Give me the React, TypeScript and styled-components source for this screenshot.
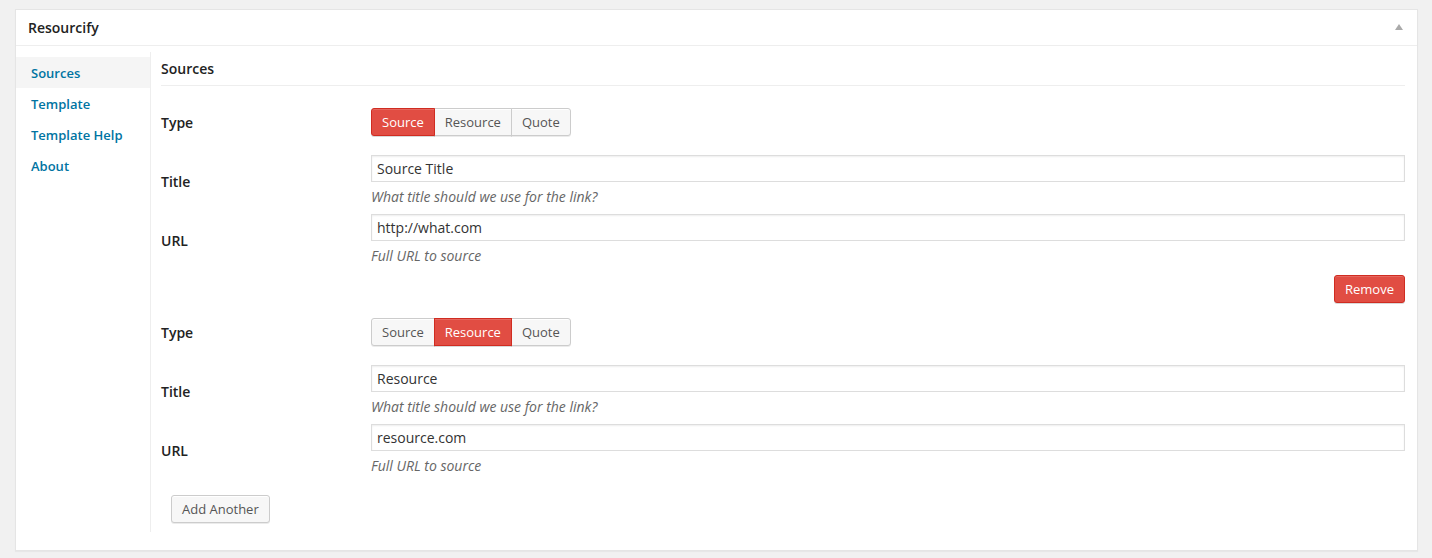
import React from "react";
import styled, { createGlobalStyle } from "styled-components";

const Global = createGlobalStyle`
  html, body { margin: 0; padding: 0; background: #f1f1f1; }
  body { font-family: "Open Sans", "Noto Sans", sans-serif; font-size: 13px; color: #444; }
  * { box-sizing: border-box; }
`;

const Page = styled.div`
  padding: 9px 14px 8px 15px;
`;

const Panel = styled.div`
  background: #fff;
  border: 1px solid #e5e5e5;
  box-shadow: 0 1px 1px rgba(0, 0, 0, 0.04);
`;

const Header = styled.div`
  height: 36px;
  display: flex;
  align-items: center;
  justify-content: space-between;
  padding: 0 14px 0 12px;
  border-bottom: 1px solid #eee;
`;

const HeaderTitle = styled.h2`
  margin: 0;
  font-size: 14px;
  font-weight: 600;
  color: #222;
  line-height: 20px;
`;

const Toggle = styled.span`
  width: 0;
  height: 0;
  border-left: 4px solid transparent;
  border-right: 4px solid transparent;
  border-bottom: 6px solid #aaa;
  margin-top: -1px;
`;

const Body = styled.div`
  display: flex;
  padding: 6px 12px 18px 0;
`;

const Sidebar = styled.ul`
  list-style: none;
  margin: 0;
  padding: 5px 0 0;
  width: 135px;
  flex: none;
  border-right: 1px solid #eee;
`;

const TabItem = styled.li<{ $active?: boolean }>`
  height: 31px;
  display: flex;
  align-items: center;
  padding: 0 15px;
  background: ${(p) => (p.$active ? "#f5f5f5" : "transparent")};
  color: #0074a2;
  font-weight: 600;
  font-size: 13px;
`;

const Content = styled.div`
  flex: 1;
  margin-left: 10px;
  padding-bottom: 9px;
`;

const SectionTitle = styled.h3`
  margin: 7px 0 0;
  padding-bottom: 6px;
  border-bottom: 1px solid #eee;
  font-size: 14px;
  font-weight: 600;
  line-height: 20px;
  color: #222;
`;

const Entries = styled.div`
  padding-top: 22px;
`;

const FieldRow = styled.div<{ $gap: number }>`
  display: flex;
  align-items: center;
  margin-bottom: ${(p) => p.$gap}px;
`;

const Label = styled.label`
  width: 210px;
  flex: none;
  font-size: 14px;
  font-weight: 600;
  color: #222;
`;

const Field = styled.div`
  flex: 1;
  min-width: 0;
`;

const Group = styled.div`
  display: inline-flex;
`;

const GroupButton = styled.button<{ $active?: boolean }>`
  height: 28px;
  margin: 0;
  margin-left: -1px;
  padding: 0 10px;
  font-family: inherit;
  font-size: 13px;
  line-height: 26px;
  border: 1px solid ${(p) => (p.$active ? "#d02c21" : "#ccc")};
  background: ${(p) => (p.$active ? "#e14d43" : "#f7f7f7")};
  color: ${(p) => (p.$active ? "#fff" : "#555")};
  box-shadow: ${(p) =>
    p.$active
      ? "inset 0 1px 0 rgba(255,255,255,0.15), 0 1px 0 rgba(0,0,0,0.15)"
      : "inset 0 1px 0 #fff, 0 1px 0 rgba(0,0,0,0.08)"};
  position: relative;
  z-index: ${(p) => (p.$active ? 1 : 0)};
  &:first-child { margin-left: 0; border-radius: 3px 0 0 3px; }
  &:last-child { border-radius: 0 3px 3px 0; }
`;

const TextInput = styled.input`
  display: block;
  width: 100%;
  height: 27px;
  padding: 0 5px;
  font-family: inherit;
  font-size: 14px;
  color: #333;
  border: 1px solid #ddd;
  box-shadow: inset 0 1px 2px rgba(0, 0, 0, 0.07);
  background: #fff;
  outline: none;
`;

const Description = styled.p`
  margin: 5px 0 0;
  font-size: 14px;
  line-height: 20px;
  font-style: italic;
  color: #666;
`;

const ActionRow = styled.div<{ $align: "end" | "start"; $mb: number; $mt: number }>`
  display: flex;
  justify-content: ${(p) => (p.$align === "end" ? "flex-end" : "flex-start")};
  margin: ${(p) => p.$mt}px 0 ${(p) => p.$mb}px;
  padding-left: ${(p) => (p.$align === "start" ? "10px" : "0")};
`;

const Button = styled.button<{ $danger?: boolean }>`
  height: 28px;
  padding: 0 10px;
  font-family: inherit;
  font-size: 13px;
  line-height: 26px;
  border-radius: 3px;
  border: 1px solid ${(p) => (p.$danger ? "#d02c21" : "#ccc")};
  background: ${(p) => (p.$danger ? "#e14d43" : "#f7f7f7")};
  color: ${(p) => (p.$danger ? "#fff" : "#555")};
  box-shadow: ${(p) =>
    p.$danger
      ? "inset 0 1px 0 rgba(255,255,255,0.15), 0 1px 0 rgba(0,0,0,0.15)"
      : "inset 0 1px 0 #fff, 0 1px 0 rgba(0,0,0,0.08)"};
`;

type Entry = { type: string; title: string; url: string; removable: boolean };

const entries: Entry[] = [
  { type: "Source", title: "Source Title", url: "http://what.com", removable: true },
  { type: "Resource", title: "Resource", url: "resource.com", removable: false },
];

const types = ["Source", "Resource", "Quote"];

const tabs = ["Sources", "Template", "Template Help", "About"];

export default function App() {
  return (
    <>
      <Global />
      <Page>
        <Panel>
          <Header>
            <HeaderTitle>Resourcify</HeaderTitle>
            <Toggle />
          </Header>
          <Body>
            <Sidebar>
              {tabs.map((t, i) => (
                <TabItem key={t} $active={i === 0}>
                  {t}
                </TabItem>
              ))}
            </Sidebar>
            <Content>
              <SectionTitle>Sources</SectionTitle>
              <Entries>
                {entries.map((e, idx) => (
                  <div key={idx}>
                    <FieldRow $gap={19}>
                      <Label>Type</Label>
                      <Field>
                        <Group>
                          {types.map((t) => (
                            <GroupButton key={t} $active={t === e.type}>
                              {t}
                            </GroupButton>
                          ))}
                        </Group>
                      </Field>
                    </FieldRow>
                    <FieldRow $gap={7}>
                      <Label>Title</Label>
                      <Field>
                        <TextInput defaultValue={e.title} />
                        <Description>What title should we use for the link?</Description>
                      </Field>
                    </FieldRow>
                    <FieldRow $gap={0}>
                      <Label>URL</Label>
                      <Field>
                        <TextInput defaultValue={e.url} />
                        <Description>Full URL to source</Description>
                      </Field>
                    </FieldRow>
                    {e.removable && (
                      <ActionRow $align="end" $mt={9} $mb={15}>
                        <Button $danger>Remove</Button>
                      </ActionRow>
                    )}
                  </div>
                ))}
                <ActionRow $align="start" $mt={19} $mb={0}>
                  <Button>Add Another</Button>
                </ActionRow>
              </Entries>
            </Content>
          </Body>
        </Panel>
      </Page>
    </>
  );
}
